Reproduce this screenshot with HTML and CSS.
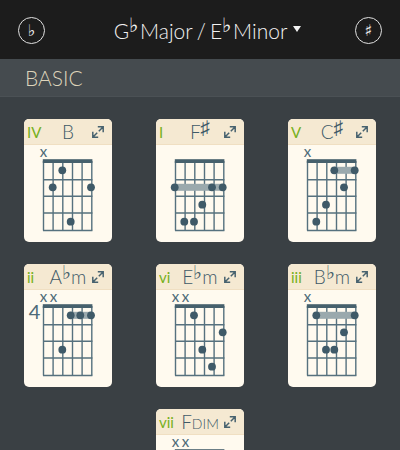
FILE: index.html
```html
<!DOCTYPE html>
<html lang="en">
<head>
    <meta charset="UTF-8">
    <meta name="viewport" content="width=device-width, initial-scale=1.0">
    <title>Chords in Gb Major</title>
    <link rel="stylesheet" href="styles.css">
</head>
<body>
    <svg class="defs" width="0" height="0">
        <symbol id="grid" viewBox="0 0 88 97">
            <path class="strings" d="M19.5 16V85.5M29.1 16V85.5M38.8 16V85.5M48.5 16V85.5M58.1 16V85.5M67.8 16V85.5"/>
            <path class="strings" d="M19 34.7H68.4M19 51.3H68.4M19 68H68.4M19 85.5H68.4"/>
            <rect class="nut" x="18.8" y="14.2" width="49.6" height="3.8"/>
        </symbol>
        <symbol id="expand" viewBox="0 0 12 12">
            <path class="expand-line" d="M1.5 10.5L5.2 6.8M6.8 5.2L10.5 1.5M5.8 .8H11.2V6.2M.8 5.8V11.2H6.2"/>
        </symbol>
    </svg>

    <header class="topbar">
        <button class="key-btn">♭</button>
        <div class="key-title">G<span class="acc">♭</span>Major<span class="slash">/</span>E<span class="acc">♭</span>Minor<span class="caret"></span></div>
        <button class="key-btn">♯</button>
    </header>

    <div class="section-bar">BASIC</div>

    <main class="chords">
        <div class="card">
            <div class="card-head">
                <span class="degree">IV</span>
                <span class="chord-name">B</span>
                <svg class="expand"><use href="#expand"/></svg>
            </div>
            <svg class="diagram" viewBox="0 0 88 97">
                <use href="#grid"/>
                <text class="mute" x="19.5" y="11.7">x</text>
                <circle cx="38.3" cy="25.3" r="3.9"/>
                <circle cx="28.7" cy="42.3" r="3.9"/>
                <circle cx="67" cy="42.3" r="3.9"/>
                <circle cx="46.7" cy="76.7" r="3.9"/>
            </svg>
        </div>

        <div class="card">
            <div class="card-head">
                <span class="degree">I</span>
                <span class="chord-name">F<span class="acc">♯</span></span>
                <svg class="expand"><use href="#expand"/></svg>
            </div>
            <svg class="diagram" viewBox="0 0 88 97">
                <use href="#grid"/>
                <rect class="barre" x="18.7" y="38.8" width="48" height="7"/>
                <circle cx="18.7" cy="42.3" r="3.9"/>
                <circle cx="56" cy="42.3" r="3.9"/>
                <circle cx="66.7" cy="42.3" r="3.9"/>
                <circle cx="46.3" cy="59.7" r="3.9"/>
                <circle cx="28.3" cy="76.7" r="3.9"/>
                <circle cx="38" cy="76.7" r="3.9"/>
            </svg>
        </div>

        <div class="card">
            <div class="card-head">
                <span class="degree">V</span>
                <span class="chord-name">C<span class="acc">♯</span></span>
                <svg class="expand"><use href="#expand"/></svg>
            </div>
            <svg class="diagram" viewBox="0 0 88 97">
                <use href="#grid"/>
                <text class="mute" x="19.5" y="11.7">x</text>
                <rect class="barre" x="46.3" y="21.8" width="20.4" height="7"/>
                <circle cx="46.3" cy="25.3" r="3.9"/>
                <circle cx="66.7" cy="25.3" r="3.9"/>
                <circle cx="56" cy="42.3" r="3.9"/>
                <circle cx="38" cy="59.7" r="3.9"/>
                <circle cx="28.3" cy="76.7" r="3.9"/>
            </svg>
        </div>

        <div class="card">
            <div class="card-head">
                <span class="degree">ii</span>
                <span class="chord-name">A<span class="acc">♭</span>m</span>
                <svg class="expand"><use href="#expand"/></svg>
            </div>
            <svg class="diagram" viewBox="0 0 88 97">
                <use href="#grid"/>
                <text class="mute" x="19.5" y="11.7">x</text>
                <text class="mute" x="29.6" y="11.7">x</text>
                <text class="fret-no" x="10.5" y="29">4</text>
                <rect class="barre" x="46.7" y="21.8" width="20.3" height="7"/>
                <circle cx="46.7" cy="25.3" r="3.9"/>
                <circle cx="56.3" cy="25.3" r="3.9"/>
                <circle cx="67" cy="25.3" r="3.9"/>
                <circle cx="38.3" cy="59.7" r="3.9"/>
            </svg>
        </div>

        <div class="card">
            <div class="card-head">
                <span class="degree">vi</span>
                <span class="chord-name">E<span class="acc">♭</span>m</span>
                <svg class="expand"><use href="#expand"/></svg>
            </div>
            <svg class="diagram" viewBox="0 0 88 97">
                <use href="#grid"/>
                <text class="mute" x="19.5" y="11.7">x</text>
                <text class="mute" x="29.6" y="11.7">x</text>
                <circle cx="38" cy="25.3" r="3.9"/>
                <circle cx="66.7" cy="42.3" r="3.9"/>
                <circle cx="46.3" cy="59.7" r="3.9"/>
                <circle cx="56" cy="76.7" r="3.9"/>
            </svg>
        </div>

        <div class="card">
            <div class="card-head">
                <span class="degree">iii</span>
                <span class="chord-name">B<span class="acc">♭</span>m</span>
                <svg class="expand"><use href="#expand"/></svg>
            </div>
            <svg class="diagram" viewBox="0 0 88 97">
                <use href="#grid"/>
                <text class="mute" x="19.5" y="11.7">x</text>
                <rect class="barre" x="28.3" y="21.8" width="38.4" height="7"/>
                <circle cx="28.3" cy="25.3" r="3.9"/>
                <circle cx="66.7" cy="25.3" r="3.9"/>
                <circle cx="56" cy="42.3" r="3.9"/>
                <circle cx="38" cy="59.7" r="3.9"/>
                <circle cx="46.3" cy="59.7" r="3.9"/>
            </svg>
        </div>

        <div class="card card-last">
            <div class="card-head">
                <span class="degree">vii</span>
                <span class="chord-name">F<span class="small">DIM</span></span>
                <svg class="expand"><use href="#expand"/></svg>
            </div>
            <svg class="diagram" viewBox="0 0 88 97">
                <use href="#grid"/>
                <text class="mute" x="19.5" y="11.7">x</text>
                <text class="mute" x="29.6" y="11.7">x</text>
            </svg>
        </div>
    </main>
</body>
</html>
```

FILE: styles.css
```css
html, body {
    height: 450px;
    overflow: hidden;
}

body {
    margin: 0;
    background-color: #3a4044;
    font-family: Lato, "DejaVu Sans", sans-serif;
}

.defs {
    position: absolute;
}

.topbar {
    display: flex;
    align-items: center;
    justify-content: space-between;
    height: 59px;
    padding: 2px 18px 0;
    box-sizing: border-box;
    background-color: #1c1c1c;
}

.key-btn {
    width: 27px;
    height: 27px;
    padding: 0;
    border: 1.3px solid #e0e0e0;
    border-radius: 50%;
    background: none;
    color: #f0f0f0;
    font-family: "DejaVu Sans", sans-serif;
    font-size: 16px;
    line-height: 1;
}

.key-title {
    display: flex;
    align-items: center;
    margin-left: 15px;
    color: #f2f2f2;
    font-size: 21px;
    font-weight: 300;
    white-space: pre;
}

.acc {
    position: relative;
    top: -6px;
    margin: 0 2px 0 0;
    font-family: "DejaVu Sans", sans-serif;
    font-size: 20px;
    line-height: 1;
}

.slash {
    margin: 0 4px;
}

.caret {
    width: 0;
    height: 0;
    margin-left: 6px;
    margin-bottom: 3px;
    border-left: 4.5px solid transparent;
    border-right: 4.5px solid transparent;
    border-top: 6px solid #f2f2f2;
}

.section-bar {
    height: 38px;
    padding-left: 25px;
    box-sizing: border-box;
    background-color: #454b4f;
    border-bottom: 1px solid #4b5155;
    color: #ddd4bb;
    font-size: 21px;
    font-weight: 300;
    line-height: 37px;
}

.chords {
    display: grid;
    grid-template-columns: repeat(3, 88px);
    column-gap: 44px;
    row-gap: 22px;
    padding: 22px 24px 0;
}

.card {
    height: 123px;
    border-radius: 5px;
    background-color: #fffaef;
}

.card-last {
    grid-column: 2;
}

.card-head {
    display: grid;
    grid-template-columns: 1fr auto 1fr;
    align-items: center;
    height: 26px;
    padding: 0 8px;
    box-sizing: border-box;
    border-radius: 5px 5px 0 0;
    background-color: #f5e9d2;
    border-bottom: 1px solid #f0dfc2;
}

.degree {
    margin-left: -5px;
    color: #76b020;
    font-size: 15px;
}

.chord-name {
    color: #3f5a68;
    font-size: 19px;
    font-weight: 300;
    white-space: nowrap;
}

.chord-name .acc {
    top: -5px;
    margin: 0;
    font-size: 19px;
}

.small {
    font-size: 14px;
}

.expand {
    justify-self: end;
    width: 12px;
    height: 12px;
}

.expand-line {
    fill: none;
    stroke: #47626f;
    stroke-width: 1.5;
}

.diagram {
    display: block;
    width: 88px;
    height: 97px;
    overflow: visible;
}

.diagram circle {
    fill: #3f5a68;
}

.strings {
    fill: none;
    stroke: #56717e;
    stroke-width: 1.4;
}

.nut {
    fill: #46606c;
}

.barre {
    fill: #9aa9ad;
}

.mute {
    fill: #4d6a78;
    font-family: Lato, sans-serif;
    font-size: 15px;
    text-anchor: middle;
}

.fret-no {
    fill: #4d6a78;
    font-family: Lato, sans-serif;
    font-size: 20px;
    text-anchor: middle;
}
```
